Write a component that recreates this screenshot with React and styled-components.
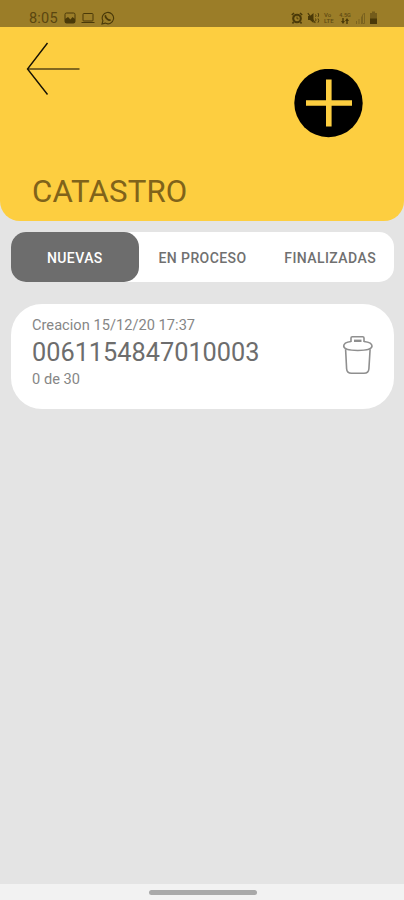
import React, { Component } from 'react'
import styled, { createGlobalStyle } from 'styled-components'

const GlobalStyle = createGlobalStyle`
    * {
        box-sizing: border-box;
    }

    body {
        margin: 0;
        background: #e4e4e4;
        font-family: Roboto, sans-serif;
    }

    button {
        padding: 0;
        border: 0;
        background: none;
        font-family: inherit;
    }

    svg {
        display: block;
    }
`

const Screen = styled.div`
    display: flex;
    flex-direction: column;
    width: 404px;
    height: 900px;
    overflow: hidden;
    background: #e4e4e4;
`

const StatusBar = styled.div`
    display: flex;
    justify-content: space-between;
    align-items: flex-start;
    height: 27px;
    padding: 9px 25px 0 29px;
    background: #9b7d28;
    color: #4a3908;
`

const StatusGroup = styled.div`
    display: flex;
    align-items: center;
    height: 17px;
    gap: ${props => props.$gap};
`

const Clock = styled.span`
    width: 29px;
    padding-top: 1px;
    font-size: 14.5px;
    line-height: 17px;
    letter-spacing: 0.2px;
    color: #5a4610;
`

const Header = styled.header`
    display: flex;
    justify-content: space-between;
    height: 194px;
    padding: 15px 41px 0 26px;
    border-radius: 0 0 20px 20px;
    background: #fdce40;
`

const HeaderLeft = styled.div`
    display: flex;
    flex-direction: column;
    justify-content: space-between;
    align-items: flex-start;
    padding-bottom: 10px;
`

const Title = styled.h1`
    margin: 0 0 0 6px;
    font-size: 31.2px;
    font-weight: 400;
    line-height: 38px;
    letter-spacing: 0.15px;
    color: #80631a;
`

const AddButton = styled.button`
    height: 69px;
    margin-top: 27px;
`

const Tabs = styled.nav`
    display: flex;
    height: 50px;
    margin: 11px 10px 0 11px;
    border-radius: 15px;
    background: #fff;
`

const Tab = styled.button`
    flex: 1;
    padding-top: 2px;
    border-radius: 15px;
    background: ${props => (props.$active ? '#6d6d6d' : 'transparent')};
    color: ${props => (props.$active ? '#fff' : '#707070')};
    font-size: 14px;
    font-weight: 500;
    line-height: 48px;
    letter-spacing: 0.42px;
    white-space: nowrap;
`

const Card = styled.article`
    display: flex;
    justify-content: space-between;
    height: 105px;
    margin: 21.5px 10px 0 11px;
    padding: 12px 20px 0 21px;
    border-radius: 31px;
    background: #fff;
`

const Small = styled.div`
    font-size: 14.6px;
    line-height: 18px;
    letter-spacing: 0.03px;
    color: #868686;
`

const Code = styled.div`
    height: 36px;
    font-size: 25.3px;
    line-height: 37px;
    color: #6d6d6d;
`

const DeleteButton = styled.button`
    height: 42px;
    margin-top: 19px;
`

const NavBar = styled.div`
    display: flex;
    justify-content: center;
    height: 16px;
    margin-top: auto;
    padding: 6px 0 0 1px;
    background: #f2f2f2;
`

const NavHandle = styled.div`
    width: 108px;
    height: 5px;
    border-radius: 3px;
    background: #a9a9a9;
`

const ImageIcon = () => (
    <svg width="12" height="12" viewBox="0 0 12 12">
        <rect x="1" y="1" width="10" height="10" rx="1.5" fill="none" stroke="currentColor" strokeWidth="1" />
        <path d="M1 11V7l3-2 2.5 2.5L8.5 5 11 7v4z" fill="currentColor" />
    </svg>
)

const LaptopIcon = () => (
    <svg width="14" height="12" viewBox="0 0 14 12" fill="none" stroke="currentColor" strokeWidth="1">
        <rect x="2" y="1.5" width="10" height="7.5" rx="0.8" />
        <path d="M0.5 10.5h13" />
    </svg>
)

const WhatsappIcon = () => (
    <svg width="14" height="14" viewBox="0 0 14 14" fill="none" stroke="currentColor" strokeWidth="1.1">
        <path d="M1 13l.9-3.2A5.7 5.7 0 1 1 4.2 12.1z" />
        <path d="M4.8 4.2c-.8 1 .3 2.8 1.3 3.7 1 .9 2.6 1.7 3.5.8" strokeWidth="1.7" />
    </svg>
)

const AlarmIcon = () => (
    <svg width="12" height="12" viewBox="0 0 12 12" fill="none" stroke="currentColor">
        <circle cx="6" cy="6.5" r="3.8" strokeWidth="2.1" />
        <path d="M.8 3L3 1M11.2 3L9 1M2.5 10L1.5 11.5M9.5 10l1 1.5" strokeWidth="1.6" />
        <path d="M6 4.5v2.3h1.5" strokeWidth=".9" />
    </svg>
)

const MuteIcon = () => (
    <svg width="13" height="12" viewBox="0 0 13 12" fill="none" stroke="currentColor">
        <path d="M1 4h2l3.5-3v10L3 8H1z" fill="currentColor" stroke="none" />
        <path d="M.8 1.2l7.5 9.8" strokeWidth="1.1" />
        <path d="M8.5 2.5q1 1.2 0 2.3M8.5 6.5q1 1.5 0 2.8M11 1q1.5 2 0 4M11 6.5q1.5 2 0 4.2" strokeWidth=".9" />
    </svg>
)

const NetworkLabel = styled.span`
    display: flex;
    flex-direction: column;
    width: 11px;
    font-size: 6px;
    font-weight: 500;
    line-height: 6px;
    color: #5f4a12;
`

const SpeedLabel = styled(NetworkLabel)`
    align-items: center;
    width: 12px;
    font-size: 5.5px;
`

const ArrowsIcon = () => (
    <svg width="8" height="6" viewBox="0 0 8 6" fill="#4a3908">
        <path d="M2 6L0 3h1.3V0h1.4v3H4zM6 0l2 3H6.7v3H5.3V3H4z" />
    </svg>
)

const SignalIcon = () => (
    <svg width="10" height="12" viewBox="0 0 10 12" fill="none" stroke="#7b631f" strokeWidth="1">
        <path d="M1.5 9v3M4 7v5M6.5 4.5V12M9.5 1v10.5h-2V3z" />
    </svg>
)

const BatteryIcon = () => (
    <svg width="10" height="13" viewBox="0 0 10 13">
        <path d="M3 .5h3V2h2v11H1V2h2z" fill="#745c1b" />
        <path d="M1 7.5h7V13H1z" fill="currentColor" />
    </svg>
)

const BackIcon = () => (
    <svg width="54" height="54" viewBox="0 0 54 54" fill="none">
        <path d="M2 27H53.5" stroke="#82681f" strokeWidth="2" />
        <path d="M21.5 1L1.5 27l20 25.5" stroke="#171204" strokeWidth="1.4" />
    </svg>
)

const PlusIcon = () => (
    <svg width="69" height="69" viewBox="0 0 69 69">
        <circle cx="34.5" cy="34" r="34.2" fill="#000" />
        <path d="M34.8 10.5V57.5M12 34h46" stroke="#fdce40" strokeWidth="5.6" />
    </svg>
)

const TrashIcon = () => (
    <svg width="32" height="42" viewBox="0 0 32 42" fill="none" stroke="#8f8f8f" strokeWidth="1.6">
        <path d="M9 7V3q0-1.3 1.3-1.3h10.4Q22 1.7 22 3v4" />
        <path d="M12 5.8h7.5" strokeWidth="2.4" />
        <path d="M9 6.5C5 7 1.7 8.800 1.7 11.100c0 3 6.300 4.400 14.100 4.400S30 14.100 30 11.100c0-2.300-3.500-4.100-8-4.600" />
        <path d="M3.600 14.300l1 19.500c.2 3 1.900 4.500 4.900 4.500h12.500c3 0 4.700-1.500 4.900-4.500l1.200-19.500" />
    </svg>
)

const tabs = ['NUEVAS', 'EN PROCESO', 'FINALIZADAS']

const items = [
    { code: '0061154847010003', created: '15/12/20 17:37', done: 0, total: 30 },
]

class App extends Component {
    state = { active: 'NUEVAS' }

    render() {
        return (
            <React.Fragment>
                <GlobalStyle />
                <Screen>
                    <StatusBar>
                        <StatusGroup $gap="5.5px">
                            <Clock>8:05</Clock>
                            <ImageIcon />
                            <LaptopIcon />
                            <WhatsappIcon />
                        </StatusGroup>
                        <StatusGroup $gap="4px">
                            <AlarmIcon />
                            <MuteIcon />
                            <NetworkLabel>
                                <span>Vo</span>
                                <span>LTE</span>
                            </NetworkLabel>
                            <SpeedLabel>
                                <span>4.5G</span>
                                <ArrowsIcon />
                            </SpeedLabel>
                            <SignalIcon />
                            <BatteryIcon />
                        </StatusGroup>
                    </StatusBar>
                    <Header>
                        <HeaderLeft>
                            <button aria-label="Volver">
                                <BackIcon />
                            </button>
                            <Title>CATASTRO</Title>
                        </HeaderLeft>
                        <AddButton aria-label="Agregar">
                            <PlusIcon />
                        </AddButton>
                    </Header>
                    <Tabs>
                        {tabs.map(tab => (
                            <Tab
                                key={tab}
                                $active={tab === this.state.active}
                                onClick={() => this.setState({ active: tab })}
                            >
                                {tab}
                            </Tab>
                        ))}
                    </Tabs>
                    {items.map(item => (
                        <Card key={item.code}>
                            <div>
                                <Small>Creacion {item.created}</Small>
                                <Code>{item.code}</Code>
                                <Small>
                                    {item.done} de {item.total}
                                </Small>
                            </div>
                            <DeleteButton aria-label="Eliminar">
                                <TrashIcon />
                            </DeleteButton>
                        </Card>
                    ))}
                    <NavBar>
                        <NavHandle />
                    </NavBar>
                </Screen>
            </React.Fragment>
        )
    }
}

export default App
